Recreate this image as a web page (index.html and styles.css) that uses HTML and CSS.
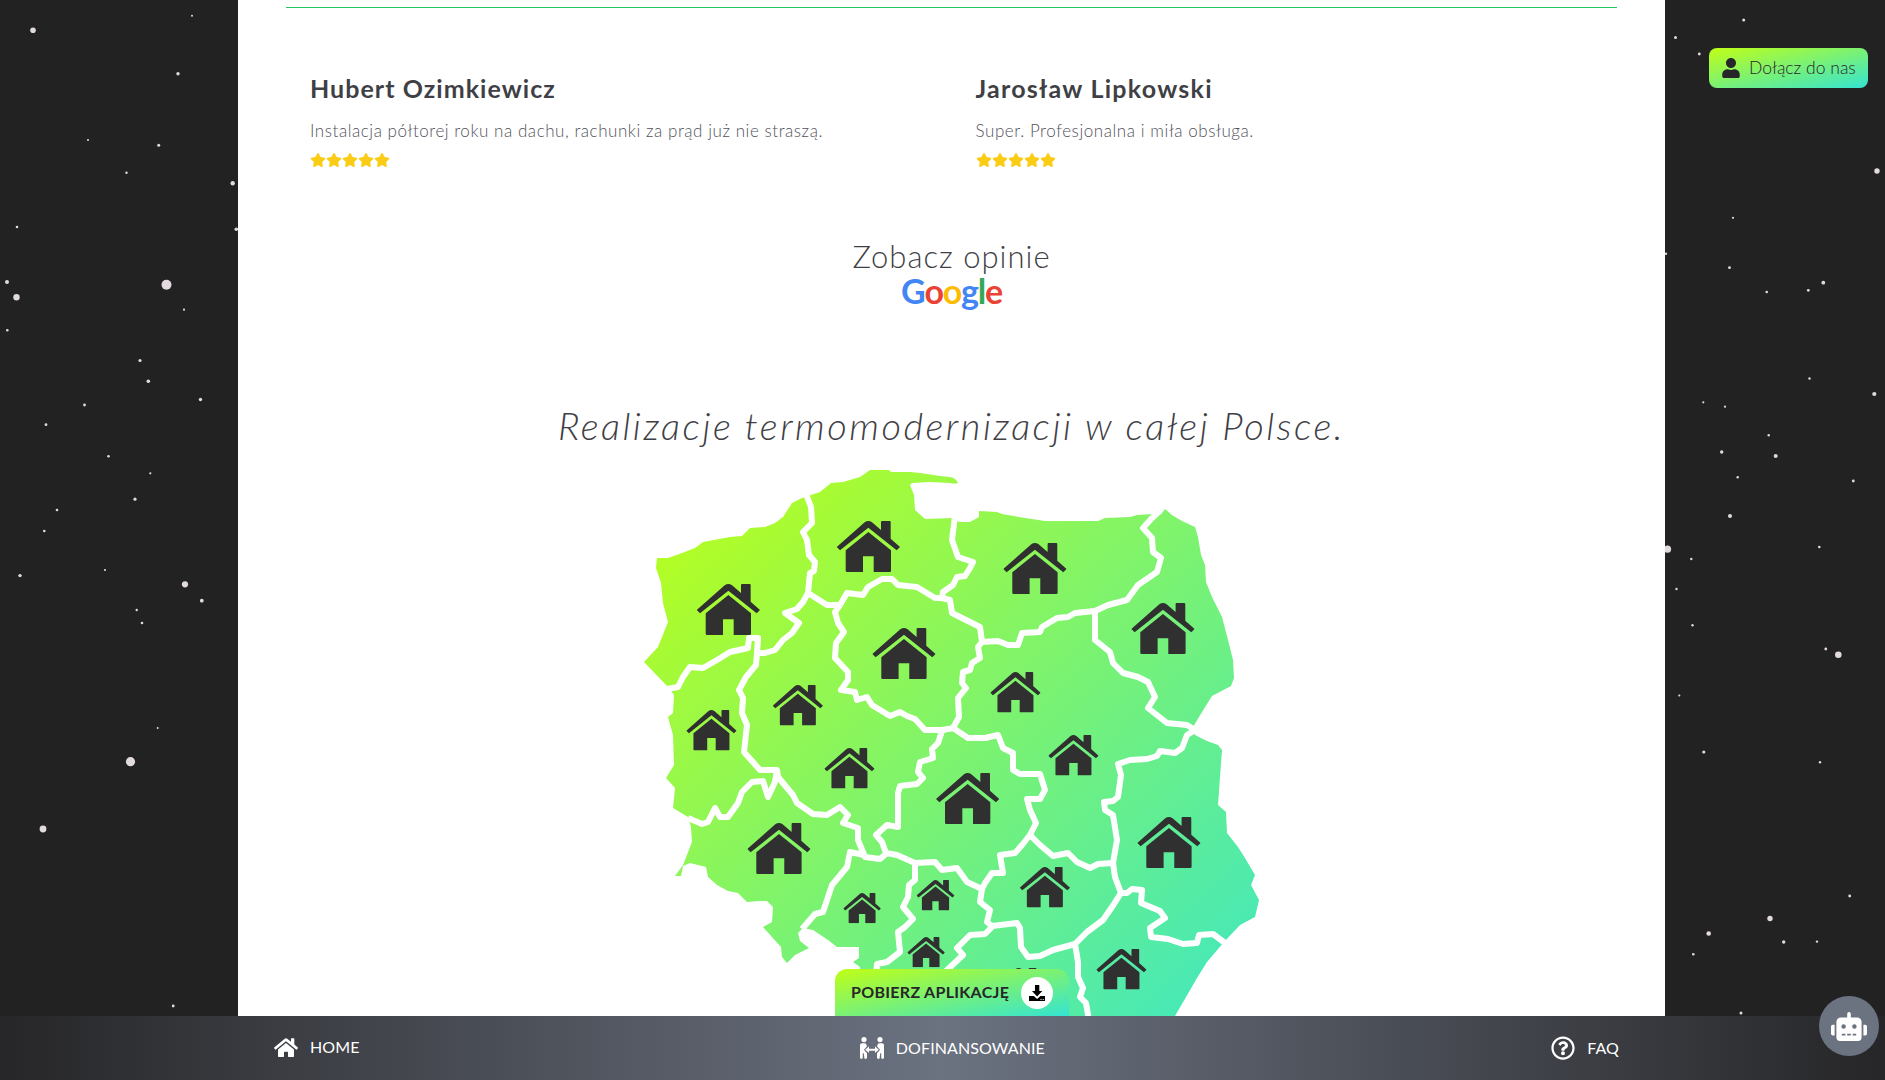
FILE: index.html
```html
<!DOCTYPE html>
<html lang="pl">
<head>
<meta charset="utf-8">
<title>Opinie i realizacje</title>
<link rel="stylesheet" href="styles.css">
</head>
<body>
<svg width="0" height="0" class="defs" aria-hidden="true">
  <defs>
    <symbol id="star" viewBox="0 0 576 512"><path d="M259.3 17.8L194 150.2 47.9 171.5c-26.2 3.8-36.7 36.1-17.7 54.6l105.7 103-25 145.5c-4.5 26.3 23.2 46 46.4 33.7L288 439.6l130.7 68.7c23.2 12.2 50.9-7.4 46.4-33.7l-25-145.5 105.7-103c19-18.5 8.5-50.8-17.7-54.6L382 150.2 316.7 17.8c-11.7-23.6-45.6-23.9-57.4 0z"/></symbol>
    <symbol id="house" viewBox="0 0 190 153"><path d="M0 78L84 4Q95-4 106 4L133 27V3q0-3 3-3h23q3 0 3 3V53L190 78 180 88 95 20 10 88ZM95 33L163 88V149q0 4-4 4H111V106H79V153H31q-4 0-4-4V88Z"/></symbol>
  </defs>
</svg>

<svg class="sky" viewBox="0 0 1885 1080" fill="#e2dade" aria-hidden="true">
  <circle cx="33" cy="30.3" r="2.8"/><circle cx="192" cy="15.7" r="1"/><circle cx="178" cy="73.7" r="1.7"/><circle cx="88" cy="140" r="1"/><circle cx="158.7" cy="145.3" r="1.5"/><circle cx="126.5" cy="172.7" r="1.2"/><circle cx="232.7" cy="183.3" r="2.2"/><circle cx="17" cy="227" r="1.3"/><circle cx="236.3" cy="229.3" r="1.8"/><circle cx="7" cy="282" r="2"/><circle cx="16.5" cy="297.2" r="3.2"/><circle cx="166.5" cy="284.7" r="5"/><circle cx="184" cy="309.7" r="1.1"/><circle cx="7.3" cy="330.3" r="1.3"/><circle cx="140" cy="360.5" r="1.6"/><circle cx="148.3" cy="381.3" r="1.8"/><circle cx="200.5" cy="399.5" r="1.7"/><circle cx="84.5" cy="405" r="1.4"/><circle cx="46" cy="424.7" r="1.4"/><circle cx="108.5" cy="456.3" r="1.3"/><circle cx="150.3" cy="473.3" r="1.1"/><circle cx="135" cy="499.2" r="1.6"/><circle cx="57" cy="510" r="1.3"/>
  <circle cx="44.3" cy="531" r="1.3"/><circle cx="20" cy="575.6" r="1.7"/><circle cx="105" cy="570" r="1.1"/><circle cx="185" cy="584.3" r="3.1"/><circle cx="201.8" cy="600.7" r="1.9"/><circle cx="136.7" cy="610" r="1.2"/><circle cx="142" cy="623" r="1.3"/><circle cx="157.7" cy="728" r="1"/><circle cx="130.5" cy="761.7" r="4.6"/><circle cx="43" cy="829" r="3.4"/><circle cx="173.2" cy="1006" r="1.4"/>
  <circle cx="1743.7" cy="20" r="1.5"/><circle cx="1675.5" cy="37.5" r="1.5"/><circle cx="1699.3" cy="54" r="1.4"/><circle cx="1877" cy="171" r="2.7"/><circle cx="1733" cy="217.8" r="1.1"/><circle cx="1666" cy="253.7" r="1.2"/><circle cx="1729.5" cy="267.7" r="1.4"/><circle cx="1766.7" cy="292" r="1.3"/><circle cx="1808.3" cy="290.3" r="1.4"/><circle cx="1823.3" cy="282.7" r="1.9"/><circle cx="1809.5" cy="378.5" r="1.2"/><circle cx="1874.3" cy="394" r="2.1"/><circle cx="1703.3" cy="402.3" r="1.1"/><circle cx="1725" cy="406.7" r="1.1"/><circle cx="1768.7" cy="435.3" r="1.2"/><circle cx="1721.7" cy="452" r="1.7"/><circle cx="1775.7" cy="456" r="2"/><circle cx="1737.7" cy="477.3" r="1.2"/><circle cx="1853.3" cy="481" r="1.4"/><circle cx="1730" cy="516" r="2"/>
  <circle cx="1667.5" cy="549.2" r="3.6"/><circle cx="1691.3" cy="559" r="1.2"/><circle cx="1819.3" cy="547" r="1.3"/><circle cx="1676.5" cy="589" r="1.2"/><circle cx="1692.5" cy="625.2" r="1.2"/><circle cx="1825.8" cy="649" r="1.4"/><circle cx="1838.3" cy="654.7" r="3.3"/><circle cx="1679.3" cy="695.5" r="1.1"/><circle cx="1703.8" cy="752" r="1.6"/><circle cx="1820" cy="762.3" r="1.2"/><circle cx="1849.7" cy="896" r="1.4"/><circle cx="1770" cy="918.5" r="2.7"/><circle cx="1708.7" cy="933.5" r="2.3"/><circle cx="1783.7" cy="942" r="1.7"/><circle cx="1817" cy="941.6" r="1.2"/><circle cx="1693.3" cy="954.3" r="1.3"/><circle cx="1741" cy="1013" r="1.5"/>
</svg>

<main class="panel">
  <section class="reviews">
    <article class="review">
      <h3 class="review-name name-a">Hubert Ozimkiewicz</h3>
      <p class="review-text text-a">Instalacja półtorej roku na dachu, rachunki za prąd już nie straszą.</p>
      <div class="rating"><svg><use href="#star"/></svg><svg><use href="#star"/></svg><svg><use href="#star"/></svg><svg><use href="#star"/></svg><svg><use href="#star"/></svg></div>
    </article>
    <article class="review">
      <h3 class="review-name name-b">Jarosław Lipkowski</h3>
      <p class="review-text text-b">Super. Profesjonalna i miła obsługa.</p>
      <div class="rating"><svg><use href="#star"/></svg><svg><use href="#star"/></svg><svg><use href="#star"/></svg><svg><use href="#star"/></svg><svg><use href="#star"/></svg></div>
    </article>
  </section>

  <a class="opinions">
    <span class="opinions-title">Zobacz opinie</span>
    <span class="google"><span class="g-blue">G</span><span class="g-red">o</span><span class="g-yellow">o</span><span class="g-blue">g</span><span class="g-green">l</span><span class="g-red">e</span></span>
  </a>

  <h2 class="headline">Realizacje termomodernizacji w całej Polsce.</h2>

  <svg class="map" viewBox="644 470 616 580">
    <defs>
      <linearGradient id="land" gradientUnits="userSpaceOnUse" x1="665" y1="465" x2="1270" y2="1100">
        <stop offset="0" stop-color="#bcff18"/><stop offset="1" stop-color="#35e5d0"/>
      </linearGradient>
    </defs>
    <path fill="url(#land)" d="M657 558L668 558 682 553 695 548 703 542 730 537 742 536 750 528 765 527 775 523 783 517 792 503 802 498 808 496 820 492 831 483 843 482 860 477 870 470 889 470 891 472 910 472 920 473 940 476 950 477Q956 478 958 483Q955 484 950 483L930 482 912 483 910 485 914 495 915 510 925 519 953 518 959 522 970 522 979 517 979 511 997 512 1002 514 1025 518 1045 521 1098 521 1105 518 1130 517 1137 515 1153 514 1162 513 1165 509 1172 515 1182 521 1195 527 1198 537 1201 555 1205 565 1206 582 1212 597 1222 617 1228 640 1233 660 1234 678 1231 686 1212 696 1202 712 1193 727 1195 735 1207 741 1218 745 1222 750 1220 777 1218 805 1226 812 1227 833 1238 847 1245 858 1255 875 1251 885 1259 900 1255 917 1240 925 1224 942 1207 962 1197 978 1175 1016 1160 1045 876 1040 862 1000 860 967 853 962 859 958 859 947 837 947 828 940 813 930 803 928 798 933 800 941 809 948 795 955 787 963 782 957 781 947 772 937 763 927 772 922 773 907 767 901 760 901 747 902 738 893 728 891 717 885 708 877 706 867 698 865 690 863 683 866 681 876 675 876 683 865 692 842 691 827 688 817 673 808 675 788 666 778 674 765 673 735 668 717 673 713 674 695 668 687 644 662 658 647 668 622 663 603 661 583 656 568Z"/>
    <g class="borders">
      <path d="M806 494L811 507 812 523 803 532 807 540 809 555 815 562 814 571 810 573 808 593 803 602 797 609 785 613 792 618 799 623 792 633 783 640 775 650 765 653 757 653 758 638 749 638 748 648 730 652 717 660 703 668 690 667 683 677 678 687 667 689"/>
      <path d="M757 653L756 665 746 677 739 690 743 698 742 713 747 725 744 752 760 770 777 770 778 777 793 795 797 803 813 814 827 815 840 807 848 815 843 823 858 828 858 840 865 857 880 859 887 853"/>
      <path d="M777 770L775 782 768 797 763 781 752 782 742 792 738 803 728 817 720 817 715 808 708 822 702 824 688 818"/>
      <path d="M808 593L827 605 840 605 847 593 863 595 868 587 882 579 892 579 898 585 917 587 935 598 942 598 950 600 952 613 980 627 982 642 998 641 1008 645 1018 645 1022 633 1040 632 1042 627 1057 618 1068 617 1075 613 1095 611 1108 605 1127 600 1138 585 1157 572 1161 558 1153 552 1152 538 1143 528 1152 518 1160 511"/>
      <path d="M955 516L952 540 958 557 973 562 970 568 965 576 957 577 953 585 943 592 942 598"/>
      <path d="M1095 611L1095 640 1110 652 1113 663 1123 673 1138 677 1148 682 1155 697 1148 708 1167 723 1187 725 1195 730 1187 735 1182 748 1175 753 1160 751 1157 756 1147 759 1130 760 1118 764 1121 775 1118 797 1113 801 1104 802 1105 810 1113 815 1117 840 1113 863 1115 877 1121 893 1127 893 1132 889 1142 890 1141 903 1160 911 1165 918 1150 928 1151 937 1168 939 1183 944 1197 943 1199 935 1213 934 1225 943"/>
      <path d="M982 642L978 647 980 658 972 663 970 670 963 672 962 683 966 688 958 698 959 717 953 728 968 738 985 738 998 735 1003 748 1013 753 1013 770 1020 774 1040 774 1045 790 1040 799 1027 799 1030 810 1036 823 1030 835 1040 845 1053 856 1068 853 1077 862 1090 868 1098 864 1113 863"/>
      <path d="M840 605L835 612 838 623 844 632 836 643 835 658 848 672 848 680 841 690 855 692 857 700 867 697 872 705 890 716 900 712 907 716 915 719 925 730 942 730 954 728"/>
      <path d="M942 731L938 743 932 749 933 758 920 762 918 772 923 778 917 784 900 786 898 793 898 827 887 825 876 835 882 842 886 853 897 855 915 863 935 862 942 870 957 868 967 882 982 889 985 883 992 873 1003 873 1000 855 1015 853 1022 845 1030 835"/>
      <path d="M982 889L980 902 990 910 987 922 992 926 1017 923 1020 928 1021 947 1028 957 1040 956 1053 950 1075 944 1087 932 1103 920 1112 907 1121 893"/>
      <path d="M992 927L985 934 970 935 957 948 963 955 945 972"/>
      <path d="M915 863L915 880 909 885 908 897 903 907 913 919 905 927 898 932 900 952 887 962 877 964 876 975"/>
      <path d="M864 855L850 852 847 867 832 885 823 912 815 914 802 929"/>
      <path d="M1075 944L1078 962 1078 977 1083 988 1080 997 1086 1003 1089 1020"/>
    </g>
    <g fill="#303030">
      <use href="#house" x="696.7" y="584" width="63.3" height="51"/>
      <use href="#house" x="836.7" y="521" width="63.3" height="51"/>
      <use href="#house" x="872.3" y="628" width="63.3" height="51"/>
      <use href="#house" x="1003.3" y="543" width="63.3" height="51"/>
      <use href="#house" x="1131.3" y="603" width="63.3" height="51"/>
      <use href="#house" x="936" y="773" width="63.3" height="51"/>
      <use href="#house" x="747.3" y="823" width="63.3" height="51"/>
      <use href="#house" x="1137.3" y="817" width="63.3" height="51"/>
      <use href="#house" x="772.7" y="685" width="50.3" height="40.5"/>
      <use href="#house" x="686.3" y="710" width="50.3" height="40.5"/>
      <use href="#house" x="824.3" y="748" width="50.3" height="40.5"/>
      <use href="#house" x="990.3" y="672" width="50.3" height="40.5"/>
      <use href="#house" x="1048.3" y="735" width="50.3" height="40.5"/>
      <use href="#house" x="1019.7" y="867" width="50.3" height="40.5"/>
      <use href="#house" x="1096.3" y="949" width="50.3" height="40.5"/>
      <use href="#house" x="993.5" y="968" width="50.3" height="40.5"/>
      <use href="#house" x="843.3" y="893" width="37.6" height="30.3"/>
      <use href="#house" x="916.5" y="880" width="38" height="30.6"/>
      <use href="#house" x="907.3" y="937" width="37.6" height="30.3"/>
    </g>
  </svg>
</main>

<a class="join">
  <svg class="join-icon" viewBox="0 0 448 512"><path fill="#27272a" d="M224 256c70.7 0 128-57.3 128-128S294.7 0 224 0 96 57.3 96 128s57.3 128 128 128zm89.6 32h-16.7c-22.2 10.2-46.9 16-72.9 16s-50.6-5.8-72.9-16h-16.7C60.2 288 0 348.2 0 422.4V464c0 26.500 21.500 48 48 48h352c26.500 0 48-21.500 48-48v-41.600c0-74.200-60.200-134.400-134.400-134.400z"/></svg>
  <span class="join-label">Dołącz do nas</span>
</a>

<a class="app">
  <span class="app-label">POBIERZ APLIKACJĘ</span>
  <span class="app-badge">
    <svg width="16" height="16" viewBox="0 0 16 16"><path d="M6 0h4.300v6h3L8.100 11.500 3 6h3ZM0 11h4.800L8.100 14 11.400 11H16v5H0ZM11.500 14v1h1v-1ZM13.700 14v1h1v-1Z" fill-rule="evenodd"/></svg>
  </span>
</a>

<nav class="nav">
  <a class="nav-item nav-home">
    <svg width="24" height="21.300" viewBox="0 0 576 512" fill="#fff"><path d="M280.370 148.260L96 300.110V464a16 16 0 0 0 16 16l112.060-.290a16 16 0 0 0 15.920-16V368a16 16 0 0 1 16-16h64a16 16 0 0 1 16 16v95.640a16 16 0 0 0 16 16.050L464 480a16 16 0 0 0 16-16V300L295.670 148.260a12.190 12.190 0 0 0-15.300 0zM571.600 251.470L488 182.560V44.050a12 12 0 0 0-12-12h-56a12 12 0 0 0-12 12v72.610L318.470 43a48 48 0 0 0-61 0L4.340 251.470a12 12 0 0 0-1.600 16.900l25.500 31A12 12 0 0 0 45.150 301l235.220-193.740a12.190 12.190 0 0 1 15.300 0L530.900 301a12 12 0 0 0 16.900-1.600l25.500-31a12 12 0 0 0-1.700-16.930z"/></svg>
    <span class="nav-label">HOME</span>
  </a>
  <a class="nav-item nav-funding">
    <svg width="24" height="22" viewBox="0 0 24 22" fill="#fff"><circle cx="4" cy="2.600" r="2.600"/><circle cx="20" cy="2.600" r="2.600"/><path d="M2 6.200H4.600Q5.900 6.200 6.300 7.400L7 9.200 4 12.700 7 16.200V20.600Q7 22 5.700 22 4.500 22 4.300 20.700L3.800 16.500 2.800 15.800V20.600Q2.800 22 1.400 22 0 22 0 20.600V8.200Q0 6.200 2 6.200ZM22 6.200H19.400Q18.100 6.200 17.700 7.400L17 9.200 20 12.700 17 16.200V20.600Q17 22 18.300 22 19.500 22 19.700 20.700L20.200 16.500 21.200 15.800V20.600Q21.200 22 22.600 22 24 22 24 20.600V8.200Q24 6.200 22 6.200ZM5.200 12.700L9 9.300V11.700H15V9.300L18.800 12.700 15 16.100V13.700H9V16.100Z"/></svg>
    <span class="nav-label">DOFINANSOWANIE</span>
  </a>
  <a class="nav-item nav-faq">
    <svg width="24" height="24" viewBox="0 0 512 512" fill="#fff"><path d="M256 8C119.043 8 8 119.083 8 256c0 136.997 111.043 248 248 248s248-111.003 248-248C504 119.083 392.957 8 256 8zm0 448c-110.532 0-200-89.431-200-200 0-110.495 89.472-200 200-200 110.491 0 200 89.471 200 200 0 110.530-89.431 200-200 200zm107.244-255.200c0 67.052-72.421 68.084-72.421 92.863V300c0 6.627-5.373 12-12 12h-45.647c-6.627 0-12-5.373-12-12v-8.659c0-35.745 27.100-50.034 47.579-61.516 17.561-9.845 28.324-16.541 28.324-29.579 0-17.246-21.999-28.693-39.784-28.693-23.189 0-33.894 10.977-48.942 29.969-4.057 5.120-11.460 6.071-16.666 2.124l-27.824-21.098c-5.107-3.872-6.251-11.066-2.644-16.363C184.846 131.491 214.940 112 261.794 112c49.071 0 101.450 38.304 101.450 88.800zM298 368c0 23.159-18.841 42-42 42s-42-18.841-42-42 18.841-42 42-42 42 18.841 42 42z"/></svg>
    <span class="nav-label">FAQ</span>
  </a>
</nav>

<button class="bot" aria-label="Czat">
  <svg width="36" height="29" viewBox="0 0 640 512" fill="#fff"><path d="M32,224H64V416H32A32,32,0,0,1,0,384V256A32,32,0,0,1,32,224Zm512-48V448a64,64,0,0,1-64,64H160a64,64,0,0,1-64-64V176a80,80,0,0,1,80-80H288V32a32,32,0,0,1,64,0V96H464A80,80,0,0,1,544,176ZM264,256a40,40,0,1,0-40,40A40,40,0,0,0,264,256Zm-8,128H192v32h64Zm96,0H288v32h64ZM456,256a40,40,0,1,0-40,40A40,40,0,0,0,456,256Zm-8,128H384v32h64ZM640,256V384a32,32,0,0,1-32,32H576V224h32A32,32,0,0,1,640,256Z"/></svg>
</button>
</body>
</html>
```
FILE: styles.css
```css
* { box-sizing: border-box; margin: 0; padding: 0; }

body {
  height: 1080px;
  overflow: hidden;
  background: #222;
  color: #3f3f46;
  font-family: Lato, "Open Sans", sans-serif;
}

.defs, .sky { position: absolute; }
.sky { inset: 0; width: 1885px; height: 1080px; }

.panel {
  position: relative;
  width: 1427px;
  height: 1080px;
  margin-left: 238px;
  padding: 7px 48px 0;
  overflow: hidden;
  background: #fff;
  display: flex;
  flex-direction: column;
  align-items: center;
}

.reviews {
  width: 100%;
  height: 231px;
  flex: none;
  padding-top: 63px;
  border-top: 1px solid #22c55e;
  display: grid;
  grid-template-columns: 1fr 1fr;
}
.review { padding: 0 24px; white-space: nowrap; }
.review-name { font-size: 25px; line-height: 34px; font-weight: 700; }
.name-a { letter-spacing: 1.05px; }
.name-b { letter-spacing: 1.25px; }
.review-text { margin-top: 14px; font-size: 17px; line-height: 24px; font-weight: 300; color: #52525b; }
.text-a { letter-spacing: 0.55px; }
.text-b { letter-spacing: 0.57px; }
.rating { display: flex; margin-top: 10px; }
.rating svg { width: 16px; height: 14px; fill: #facc15; }

.opinions { display: flex; flex-direction: column; align-items: center; height: 160px; flex: none; }
.opinions-title { font-size: 31px; line-height: 36px; font-weight: 300; letter-spacing: 1px; }
.google { font-size: 34px; line-height: 34px; font-weight: 700; letter-spacing: -1.2px; }
.g-blue { color: #4285f4; }
.g-red { color: #ea4335; }
.g-yellow { color: #fbbc05; }
.g-green { color: #34a853; }

.headline { flex: none; height: 72px; font-size: 38px; line-height: 54px; font-weight: 300; font-style: italic; letter-spacing: 2.5px; white-space: nowrap; }

.map { flex: none; width: 616px; height: 580px; margin-left: 1px; }
.borders { fill: none; stroke: #fff; stroke-width: 6; stroke-linejoin: round; }

.join, .app { background: linear-gradient(to bottom right, #c0ff15, #35e4d2); color: #27272a; display: flex; align-items: center; white-space: nowrap; }
.join {
  position: fixed; top: 48px; right: 17px;
  width: 159px; height: 40px; padding-left: 13px; gap: 9px;
  border-radius: 8px;
  font-size: 17.5px; font-weight: 300;
}
.join-icon { width: 18px; height: 20px; }
.join-label { padding-bottom: 2px; }

.app {
  position: fixed; left: 835px; bottom: 64px;
  width: 234px; height: 47px; padding: 0 16px;
  justify-content: space-between;
  border-radius: 12px 12px 0 0;
  font-size: 16px; font-weight: 700; letter-spacing: 0.3px;
}
.app-label { padding-bottom: 2px; }
.app-badge { width: 32px; height: 32px; border-radius: 50%; background: #fff; display: grid; place-items: center; }

.nav {
  position: fixed; left: 0; right: 0; bottom: 0;
  height: 64px; padding: 0 266px 0 274px;
  background: linear-gradient(90deg, #262628, #6b7280 50%, #262628);
  color: #fff; font-size: 16px;
  display: flex; align-items: center; justify-content: space-between;
}
.nav-item { display: flex; align-items: center; gap: 12px; }
.nav-label { padding-bottom: 2px; letter-spacing: 0.1px; }
.nav-funding { margin-right: 6px; }

.bot {
  position: fixed; right: 6px; bottom: 24px;
  width: 60px; height: 60px;
  border: 0; border-radius: 50%; background: #6b7280;
  display: grid; place-items: center;
}
```
